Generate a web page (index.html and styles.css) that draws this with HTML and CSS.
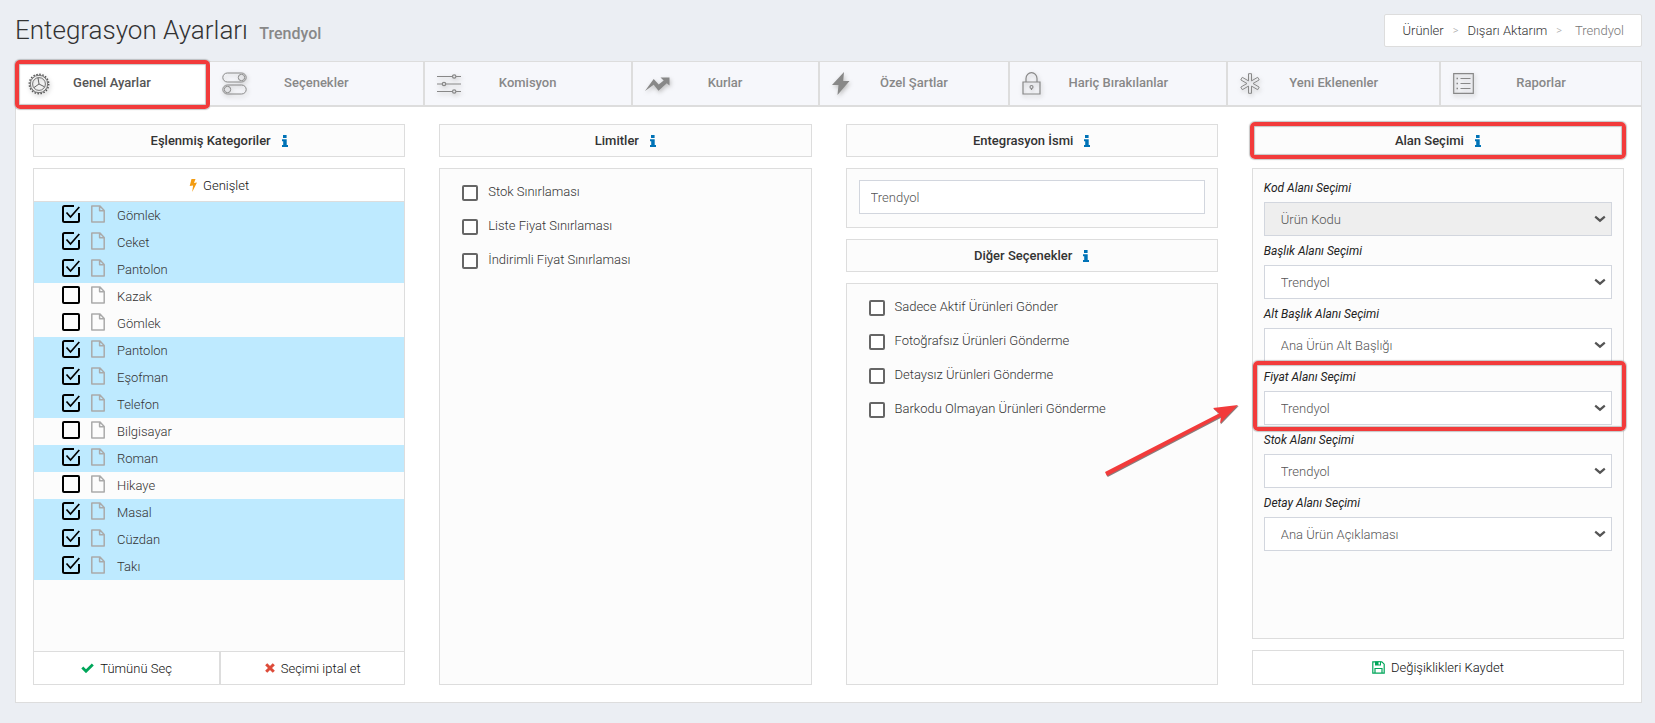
FILE: index.html
```html
<!DOCTYPE html>
<html lang="tr">
<head>
<meta charset="utf-8">
<meta name="viewport" content="width=device-width, initial-scale=1">
<title>Entegrasyon Ayarları</title>
<link rel="stylesheet" href="styles.css">
</head>
<body>
<svg class="sprite" aria-hidden="true">
  <symbol id="info" viewBox="0 0 6 12"><path fill="currentColor" d="M1 0h3.600v3H1zM0 4.200h4.700v5.800H6V12H0v-2h1.200V6.200H0z"/></symbol>
  <symbol id="box-off" viewBox="0 0 18 18"><rect x="1" y="1" width="16" height="16" rx="1" fill="none" stroke="currentColor" stroke-width="2"/></symbol>
  <symbol id="box-on" viewBox="0 0 18 18"><path d="M12 1H2.500Q1 1 1 2.500v13Q1 17 2.500 17H15.500Q17 17 17 15.500V8" fill="none" stroke="currentColor" stroke-width="2"/><path d="M4.500 7.500l4 4.500L17.300 2" fill="none" stroke="currentColor" stroke-width="1.700"/></symbol>
  <symbol id="file" viewBox="0 0 14 18"><path d="M.8 1h8.200l4.200 4.500v11.500H.8zM8.600 1v4.800h4.600" fill="none" stroke="currentColor" stroke-width="1.500" stroke-linejoin="round"/></symbol>
  <symbol id="chevron" viewBox="0 0 12 8"><path d="M1.200 1.700L6 5.700l4.800-4" fill="none" stroke="currentColor" stroke-width="2.200"/></symbol>
</svg>

<header class="page-head">
  <h1 class="page-title">Entegrasyon Ayarları <small>Trendyol</small></h1>
  <nav class="breadcrumb" aria-label="Konum">
    <a href="#">Ürünler</a><span class="sep">&gt;</span><a href="#">Dışarı Aktarım</a><span class="sep">&gt;</span><span class="current">Trendyol</span>
  </nav>
</header>

<main class="card">
  <nav class="tabs">
    <button class="tab active marked" type="button">
      <svg class="tab-icon" width="22" height="22" viewBox="0 0 22 22" fill="none" stroke="currentColor"><circle cx="11" cy="11" r="9.700" stroke-width="1.500" stroke-dasharray="1.500 1.547"/><circle cx="11" cy="11" r="8.700" stroke-width=".8"/><circle cx="11" cy="11" r="6.400" stroke-width=".8"/><path stroke-width=".9" d="M11 11L10 4.800M11 11l5.500 2.800M11 11l-5 3.500"/></svg>Genel Ayarlar</button>
    <button class="tab" type="button">
      <svg class="tab-icon" width="25" height="23" viewBox="0 0 25 23" fill="none" stroke="currentColor"><rect x=".8" y="1" width="23.400" height="9" rx="4.500"/><circle cx="19.500" cy="5.500" r="3.200"/><rect x=".8" y="13" width="23.400" height="9" rx="4.500"/><circle cx="5.500" cy="17.500" r="3.200"/></svg>Seçenekler</button>
    <button class="tab" type="button">
      <svg class="tab-icon" width="24" height="20" viewBox="0 0 24 20" fill="none" stroke="currentColor" stroke-width="1.200"><path d="M0 2.500h15.500M19 2.500h5M0 10h5M9 10h15M0 17.500h15.500M19 17.500h5"/><circle cx="17.200" cy="2.500" r="1.700"/><circle cx="7" cy="10" r="1.700"/><circle cx="17.200" cy="17.500" r="1.700"/></svg>Komisyon</button>
    <button class="tab" type="button">
      <svg class="tab-icon" width="25" height="14" viewBox="0 0 25 14" fill="currentColor"><path d="M0 14L8.700 2l5 5.500 5-4L15.500.5H24.500v8l-2.700-2.300-8.300 7.500-4.800-6z"/></svg>Kurlar</button>
    <button class="tab" type="button">
      <svg class="tab-icon" width="18" height="23" viewBox="0 0 18 23" fill="currentColor"><path d="M12 0L0 13h6.500L5.500 23 17.500 9h-6.300z"/></svg>Özel Şartlar</button>
    <button class="tab" type="button">
      <svg class="tab-icon" width="19" height="23" viewBox="0 0 19 23" fill="none" stroke="currentColor" stroke-width="1.200"><path d="M1 10h17v12H1zM4 10V6.500a5.500 5.800 0 0 1 11 0V10"/><circle cx="9.500" cy="15" r="1.500"/><path d="M9.500 16.500V18"/></svg>Hariç Bırakılanlar</button>
    <button class="tab" type="button">
      <svg class="tab-icon" width="20" height="21" viewBox="0 0 20 21" fill="none" stroke="currentColor"><path d="M8.500.7h3v7.200l6.200-3.600 1.500 2.600-6.200 3.600 6.200 3.600-1.500 2.600-6.200-3.600v7.200h-3v-7.200l-6.200 3.600-1.500-2.600L7 10.500.8 6.900l1.500-2.600 6.200 3.600z"/></svg>Yeni Eklenenler</button>
    <button class="tab" type="button">
      <svg class="tab-icon" width="21" height="21" viewBox="0 0 21 21" fill="none" stroke="currentColor" stroke-width="1.200"><path d="M.7.7h19.600v19.600H.7zM7.500 5.500h10M7.500 10.500h10M7.500 15.500h10"/><path d="M3.500 5.500h1.500M3.500 10.500h1.500M3.500 15.500h1.500" stroke-width="1.500"/></svg>Raporlar</button>
  </nav>

  <div class="columns">
    <section class="column">
      <h2 class="box heading">Eşlenmiş Kategoriler <svg class="info"><use href="#info"/></svg></h2>
      <div class="box panel tree">
        <button class="action expand" type="button"><svg width="8" height="13" viewBox="0 0 8 13" class="orange"><path fill="currentColor" d="M2.500 0h4L5 4l3-.6L3.200 13l.9-6.500L.7 7z"/></svg>Genişlet</button>
        <ul class="tree-list">
          <li><label><input type="checkbox" checked><svg class="off"><use href="#box-off"/></svg><svg class="on"><use href="#box-on"/></svg><svg class="file"><use href="#file"/></svg><span>Gömlek</span></label></li>
          <li><label><input type="checkbox" checked><svg class="off"><use href="#box-off"/></svg><svg class="on"><use href="#box-on"/></svg><svg class="file"><use href="#file"/></svg><span>Ceket</span></label></li>
          <li><label><input type="checkbox" checked><svg class="off"><use href="#box-off"/></svg><svg class="on"><use href="#box-on"/></svg><svg class="file"><use href="#file"/></svg><span>Pantolon</span></label></li>
          <li><label><input type="checkbox"><svg class="off"><use href="#box-off"/></svg><svg class="on"><use href="#box-on"/></svg><svg class="file"><use href="#file"/></svg><span>Kazak</span></label></li>
          <li><label><input type="checkbox"><svg class="off"><use href="#box-off"/></svg><svg class="on"><use href="#box-on"/></svg><svg class="file"><use href="#file"/></svg><span>Gömlek</span></label></li>
          <li><label><input type="checkbox" checked><svg class="off"><use href="#box-off"/></svg><svg class="on"><use href="#box-on"/></svg><svg class="file"><use href="#file"/></svg><span>Pantolon</span></label></li>
          <li><label><input type="checkbox" checked><svg class="off"><use href="#box-off"/></svg><svg class="on"><use href="#box-on"/></svg><svg class="file"><use href="#file"/></svg><span>Eşofman</span></label></li>
          <li><label><input type="checkbox" checked><svg class="off"><use href="#box-off"/></svg><svg class="on"><use href="#box-on"/></svg><svg class="file"><use href="#file"/></svg><span>Telefon</span></label></li>
          <li><label><input type="checkbox"><svg class="off"><use href="#box-off"/></svg><svg class="on"><use href="#box-on"/></svg><svg class="file"><use href="#file"/></svg><span>Bilgisayar</span></label></li>
          <li><label><input type="checkbox" checked><svg class="off"><use href="#box-off"/></svg><svg class="on"><use href="#box-on"/></svg><svg class="file"><use href="#file"/></svg><span>Roman</span></label></li>
          <li><label><input type="checkbox"><svg class="off"><use href="#box-off"/></svg><svg class="on"><use href="#box-on"/></svg><svg class="file"><use href="#file"/></svg><span>Hikaye</span></label></li>
          <li><label><input type="checkbox" checked><svg class="off"><use href="#box-off"/></svg><svg class="on"><use href="#box-on"/></svg><svg class="file"><use href="#file"/></svg><span>Masal</span></label></li>
          <li><label><input type="checkbox" checked><svg class="off"><use href="#box-off"/></svg><svg class="on"><use href="#box-on"/></svg><svg class="file"><use href="#file"/></svg><span>Cüzdan</span></label></li>
          <li><label><input type="checkbox" checked><svg class="off"><use href="#box-off"/></svg><svg class="on"><use href="#box-on"/></svg><svg class="file"><use href="#file"/></svg><span>Takı</span></label></li>
        </ul>
        <div class="tree-foot">
          <button class="action" type="button"><svg width="13" height="10" viewBox="0 0 13 10" class="green"><path d="M1.300 4.500l3.700 3.700L11.800 1.400" fill="none" stroke="currentColor" stroke-width="2.800"/></svg>Tümünü Seç</button>
          <button class="action" type="button"><svg width="10" height="10" viewBox="0 0 10 10" class="red"><path d="M1.200 1.200l7.600 7.600M8.800 1.200L1.200 8.800" fill="none" stroke="currentColor" stroke-width="3"/></svg>Seçimi iptal et</button>
        </div>
      </div>
    </section>

    <section class="column">
      <h2 class="box heading">Limitler <svg class="info"><use href="#info"/></svg></h2>
      <div class="box panel options">
        <label class="option"><input type="checkbox">Stok Sınırlaması</label>
        <label class="option"><input type="checkbox">Liste Fiyat Sınırlaması</label>
        <label class="option"><input type="checkbox">İndirimli Fiyat Sınırlaması</label>
      </div>
    </section>

    <section class="column">
      <h2 class="box heading">Entegrasyon İsmi <svg class="info"><use href="#info"/></svg></h2>
      <div class="box name-box"><input class="text-input" type="text" value="Trendyol" aria-label="Entegrasyon İsmi"></div>
      <h2 class="box heading">Diğer Seçenekler <svg class="info"><use href="#info"/></svg></h2>
      <div class="box panel options">
        <label class="option"><input type="checkbox">Sadece Aktif Ürünleri Gönder</label>
        <label class="option"><input type="checkbox">Fotoğrafsız Ürünleri Gönderme</label>
        <label class="option"><input type="checkbox">Detaysız Ürünleri Gönderme</label>
        <label class="option"><input type="checkbox">Barkodu Olmayan Ürünleri Gönderme</label>
      </div>
    </section>

    <section class="column">
      <h2 class="box heading marked">Alan Seçimi <svg class="info"><use href="#info"/></svg></h2>
      <div class="box panel fields">
        <div class="field"><label for="kod">Kod Alanı Seçimi</label><div class="select"><select id="kod" disabled><option>Ürün Kodu</option></select><svg><use href="#chevron"/></svg></div></div>
        <div class="field"><label for="baslik">Başlık Alanı Seçimi</label><div class="select"><select id="baslik"><option>Trendyol</option></select><svg><use href="#chevron"/></svg></div></div>
        <div class="field"><label for="alt">Alt Başlık Alanı Seçimi</label><div class="select"><select id="alt"><option>Ana Ürün Alt Başlığı</option></select><svg><use href="#chevron"/></svg></div></div>
        <div class="field marked"><label for="fiyat">Fiyat Alanı Seçimi</label><div class="select"><select id="fiyat"><option>Trendyol</option></select><svg><use href="#chevron"/></svg></div>
          <svg class="arrow" width="136" height="74" viewBox="0 0 136 74"><path fill="#8a7c7c" transform="translate(.7 1)" d="M1 67L115 8.500l-6-5.500L134 0 116 18.500l1-7L3 71z"/><path fill="#f23b3b" d="M1 67L115 8.500l-6-5.500L134 0 116 18.500l1-7L3 71z"/></svg>
        </div>
        <div class="field"><label for="stok">Stok Alanı Seçimi</label><div class="select"><select id="stok"><option>Trendyol</option></select><svg><use href="#chevron"/></svg></div></div>
        <div class="field"><label for="detay">Detay Alanı Seçimi</label><div class="select"><select id="detay"><option>Ana Ürün Açıklaması</option></select><svg><use href="#chevron"/></svg></div></div>
      </div>
      <button class="box action save" type="button"><svg width="13" height="13" viewBox="0 0 13 13" class="green"><path fill="none" stroke="currentColor" stroke-width="1.200" d="M.8.8h9l2.400 2.400v9H.8zM3 12V7.500h7V12"/><path fill="currentColor" d="M3 .5h6v4H3z"/><path fill="#fff" d="M6.500 1.200H8v2.400H6.500z"/></svg>Değişiklikleri Kaydet</button>
    </section>
  </div>
</main>
</body>
</html>
```
FILE: styles.css
```css
* { box-sizing: border-box; }

body {
  margin: 0;
  min-height: 100vh;
  padding: 14px 13px 20px 15px;
  display: flex;
  flex-direction: column;
  background: #ebeef3;
  color: #333;
  font-family: Roboto, "Open Sans", sans-serif;
  font-size: 13px;
  font-weight: 300;
}

button, input, select { font: inherit; color: inherit; }
.sprite { display: none; }

.page-head {
  display: flex;
  justify-content: space-between;
  align-items: flex-start;
  height: 47px;
}
.page-title {
  margin: 0;
  font-size: 26px;
  line-height: 32px;
  font-weight: 300;
  color: #333;
}
.page-title small {
  margin-left: 5px;
  font-size: 16px;
  font-weight: 500;
  color: #888;
}
.breadcrumb {
  display: flex;
  align-items: center;
  height: 33px;
  padding: 0 17px;
  background: #fff;
  border: 1px solid #ddd;
  border-radius: 2px;
  color: #777;
}
.breadcrumb a { color: #333; text-decoration: none; }
.breadcrumb .sep { margin: 0 9px; font-size: 11px; color: #aaa; }
.breadcrumb .current { margin-left: 4px; }

.card {
  flex: 1;
  display: flex;
  flex-direction: column;
  background: #fff;
  border: 1px solid #ddd;
}

.tabs {
  display: grid;
  grid-template-columns: 194fr 215fr 208fr 187fr 191fr 218fr 213fr 200fr;
  height: 45px;
}
.tab {
  position: relative;
  padding: 0 0 2px;
  background: #f6f7fb;
  border: 0;
  border-right: 2px solid #ddd;
  border-bottom: 2px solid #ddd;
  color: #888;
  font-size: 13px;
  font-weight: 500;
}
.tab:last-child { border-right: 0; }
.tab.active { background: #fff; color: #555; }
.tab-icon {
  position: absolute;
  left: 12px;
  top: 0;
  bottom: 0;
  margin: auto 0;
  filter: drop-shadow(1px 2px 2px #bbb);
}

/* Red highlight frame around the element being pointed out */
.marked { position: relative; }
.marked::after {
  content: "";
  position: absolute;
  inset: -3px;
  border: 4px solid #f23b3b;
  border-radius: 5px;
  box-shadow: 0 0 1px 1px #8887, inset 0 0 1px 1px #8887;
  pointer-events: none;
}
.tab.marked::after { inset: -2px -2px -4px -1px; }
.field.marked::after { inset: -1px -14px -6px -11px; }

.columns {
  flex: 1;
  display: grid;
  grid-template-columns: repeat(4, minmax(0, 1fr));
  gap: 34px;
  padding: 17px;
}
.column { display: flex; flex-direction: column; gap: 11px; }
.box { background: #fcfcfc; border: 1px solid #ddd; }
.heading {
  display: flex;
  align-items: center;
  justify-content: center;
  height: 33px;
  margin: 0;
  font-size: 13px;
  font-weight: 500;
}
.info { width: 6px; height: 12px; margin-left: 11px; color: #0073b7; }
.panel { flex: 1; }

.action {
  display: flex;
  align-items: center;
  justify-content: center;
  gap: 6px;
  background: #fff;
  border: 0;
  color: #111;
  font-size: 13px;
}
.orange { color: #f39c12; }
.green { color: #00a65a; }
.red { color: #dd4b39; }

.tree { display: flex; flex-direction: column; }
.expand { height: 33px; border-bottom: 1px solid #ddd; }
.tree-list { flex: 1; margin: 0; padding: 0; list-style: none; }
.tree-list label {
  display: flex;
  height: 27px;
  padding: 3px 0 0 28px;
}
.tree-list li:has(:checked) { background: #beeaff; }
.tree-list input { position: absolute; opacity: 0; }
.tree-list svg { width: 18px; height: 18px; color: #000; }
.tree-list .on { display: none; }
.tree-list :checked ~ .on { display: block; }
.tree-list :checked ~ .off { display: none; }
.tree-list .file { width: 14px; margin: 0 12px 0 11px; color: #aaa; }
.tree-list span { line-height: 22px; }
.tree-foot {
  display: grid;
  grid-template-columns: 1fr 1fr;
  height: 33px;
  border-top: 1px solid #ddd;
}
.tree-foot .action + .action { border-left: 2px solid #ddd; }

.options { padding: 15px 22px; }
.option {
  display: flex;
  align-items: flex-start;
  height: 34px;
  line-height: 16px;
}
.option input {
  appearance: none;
  width: 16px;
  height: 16px;
  margin: 1px 10px 0 0;
  border: 2px solid #666;
  border-radius: 2px;
  background: #fff;
}

.name-box { height: 60px; padding: 11px 12px; }
.text-input {
  width: 100%;
  height: 34px;
  padding: 0 11px;
  background: #fff;
  border: 1px solid #d2d6de;
  color: #555;
}

.fields { padding: 4px 11px; }
.field label {
  display: block;
  height: 29px;
  padding-top: 7px;
  line-height: 16px;
  font-size: 12px;
  font-style: italic;
  font-weight: 400;
  color: #222;
}
.select { position: relative; }
.select select {
  display: block;
  appearance: none;
  width: 100%;
  height: 34px;
  padding: 0 16px;
  background: #fff;
  border: 1px solid #d2d6de;
  border-radius: 0;
  color: #555;
}
.select select:disabled { background: #eee; opacity: 1; }
.select svg {
  position: absolute;
  right: 6px;
  top: 13px;
  width: 12px;
  height: 8px;
  color: #555;
  pointer-events: none;
}
.arrow { position: absolute; right: calc(100% + 24px); top: 43px; }
.save { height: 35px; border: 1px solid #ddd; }
```
